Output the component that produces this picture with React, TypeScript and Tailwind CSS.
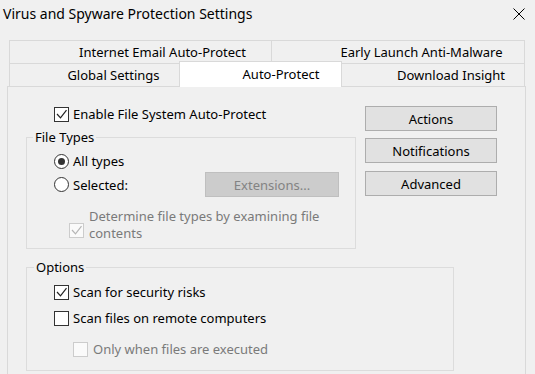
import React from "react";

function Check({ checked, disabled }: { checked?: boolean; disabled?: boolean }) {
  return (
    <span
      className={
        disabled
          ? "w-[15px] h-[15px] shrink-0 border border-[#cccccc] bg-[#fafafa] flex"
          : "w-[15px] h-[15px] shrink-0 border border-[#333333] bg-white flex"
      }
    >
      {checked && (
        <svg width="13" height="13" viewBox="0 0 13 13">
          <path
            d="M2 6 L5.5 9.8 L11.5 2.2"
            fill="none"
            stroke={disabled ? "#b5b5b5" : "#222222"}
            strokeWidth="1.2"
          />
        </svg>
      )}
    </span>
  );
}

function Radio({ checked }: { checked?: boolean }) {
  return (
    <span className="w-[15px] h-[15px] shrink-0 rounded-full border border-[#333333] bg-white flex items-center justify-center">
      {checked && <span className="w-[7px] h-[7px] rounded-full bg-[#333333]" />}
    </span>
  );
}

function Tab({ cls, children }: { cls: string; children: React.ReactNode }) {
  return (
    <div className={"flex items-center justify-center whitespace-nowrap border-[#d9d9d9] " + cls}>
      {children}
    </div>
  );
}

function Button({ label }: { label: string }) {
  return (
    <button className="w-[132px] h-[25px] bg-[#e1e1e1] border border-[#adadad] flex items-center justify-center">
      {label}
    </button>
  );
}

export default function App() {
  return (
    <div className="w-[535px] h-[374px] overflow-hidden bg-[#f0f0f0] text-black text-[13px] leading-[16px] [font-family:'Noto_Sans','Open_Sans',sans-serif]">
      {/* title bar */}
      <div className="h-[27px] flex items-center justify-between pl-[3px] pr-[9px]">
        <span className="text-[14px] leading-[18px]">Virus and Spyware Protection Settings</span>
        <svg width="14" height="14" viewBox="0 0 14 14">
          <path d="M1.5 1.5 L12.5 12.5 M12.5 1.5 L1.5 12.5" stroke="#000" strokeWidth="1" />
        </svg>
      </div>

      {/* tabs */}
      <div className="mt-[13px] ml-[9px] w-[516px]">
        <div className="flex h-[23px]">
          <Tab cls="w-[262px] border-t border-l pl-[44px]">Internet Email Auto-Protect</Tab>
          <Tab cls="w-[254px] border-t border-l border-r pl-[47px]">Early Launch Anti-Malware</Tab>
        </div>
        <div className="flex items-end h-[23px]">
          <Tab cls="w-[170px] h-[23px] border-t border-l pl-[38px]">Global Settings</Tab>
          <Tab cls="relative z-10 w-[163px] h-[26px] -mb-px bg-white border-t border-l border-r pl-[41px] pb-[2px]">
            Auto-Protect
          </Tab>
          <Tab cls="w-[183px] h-[23px] border-t border-r pl-[36px]">Download Insight</Tab>
        </div>
      </div>

      {/* pane */}
      <div className="ml-[7px] w-[519px] h-[300px] border border-[#d9d9d9] bg-[#f0f0f0]">
        <div className="flex pt-[19px]">
          <div className="ml-[18px] w-[330px]">
            <div className="flex items-center gap-[4px] ml-[28px] h-[16px]">
              <Check checked />
              <span>Enable File System Auto-Protect</span>
            </div>

            <fieldset className="mt-[7px] border border-[#dcdcdc] pb-[6px]">
              <legend className="ml-[6px] px-[2px]">File Types</legend>
              <div className="flex items-center gap-[4px] ml-[27px] mt-[8px] h-[16px]">
                <Radio checked />
                <span>All types</span>
              </div>
              <div className="flex items-center mt-[3px] h-[25px]">
                <div className="flex items-center gap-[4px] ml-[27px]">
                  <Radio />
                  <span>Selected:</span>
                </div>
                <div className="ml-auto mr-[16px] w-[134px] h-[25px] bg-[#cccccc] border border-[#bfbfbf] text-[#838383] flex items-center justify-center">
                  Extensions...
                </div>
              </div>
              <div className="flex items-start gap-[5px] ml-[42px] mt-[11px] text-[#7a7a7a] leading-[17px]">
                <span className="mt-[15px]">
                  <Check checked disabled />
                </span>
                <span>
                  Determine file types by examining file
                  <br />
                  contents
                </span>
              </div>
            </fieldset>
          </div>

          <div className="ml-[9px] flex flex-col">
            <Button label="Actions" />
            <div className="mt-[7px]">
              <Button label="Notifications" />
            </div>
            <div className="mt-[8px]">
              <Button label="Advanced" />
            </div>
          </div>
        </div>

        <fieldset className="mt-[10px] ml-[18px] w-[428px] border border-[#dcdcdc] pb-[13px]">
          <legend className="ml-[7px] px-[2px]">Options</legend>
          <div className="flex items-center gap-[4px] ml-[27px] mt-[9px] h-[16px]">
            <Check checked />
            <span>Scan for security risks</span>
          </div>
          <div className="flex items-center gap-[4px] ml-[27px] mt-[10px] h-[16px]">
            <Check />
            <span>Scan files on remote computers</span>
          </div>
          <div className="flex items-center gap-[5px] ml-[46px] mt-[15px] h-[16px] text-[#7a7a7a]">
            <Check disabled />
            <span>Only when files are executed</span>
          </div>
        </fieldset>
      </div>
    </div>
  );
}
